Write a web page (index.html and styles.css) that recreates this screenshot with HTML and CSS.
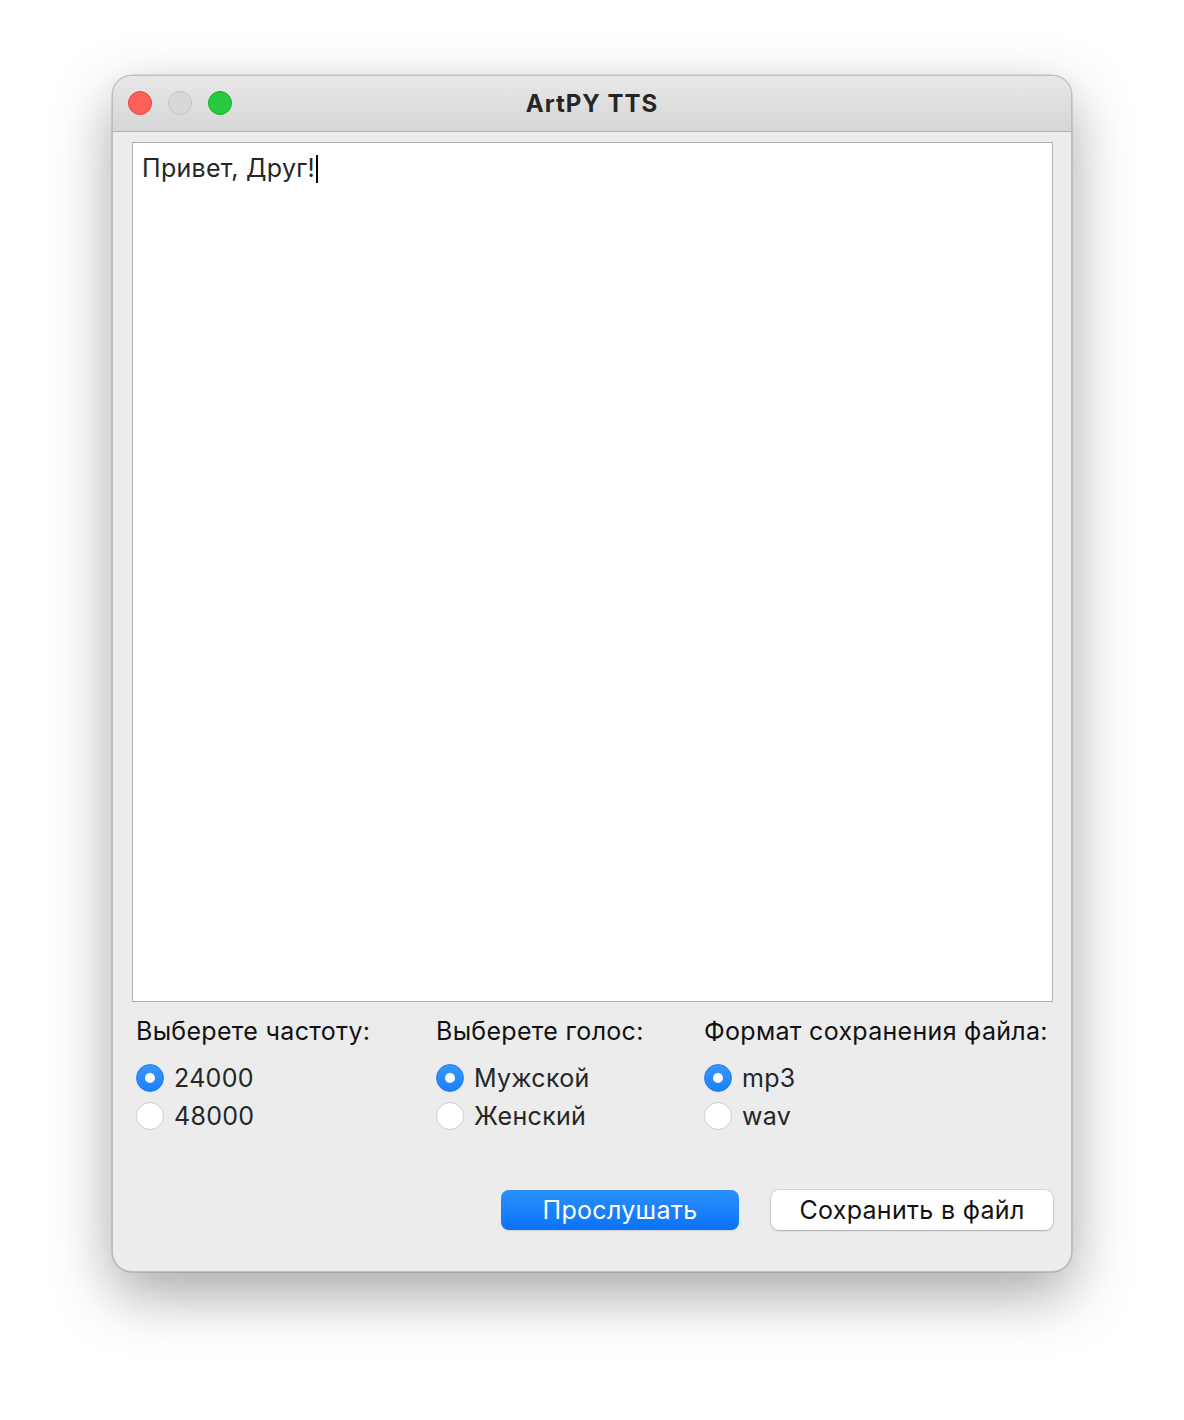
FILE: index.html
```html
<!DOCTYPE html>
<html lang="ru">
<head>
<meta charset="utf-8">
<title>ArtPY TTS</title>
<link rel="stylesheet" href="styles.css">
</head>
<body>
<div class="window">
  <div class="titlebar">
    <div class="lights">
      <span class="light red"></span>
      <span class="light grey"></span>
      <span class="light green"></span>
    </div>
    <div class="title">ArtPY TTS</div>
  </div>
  <div class="content">
    <div class="textarea"><span class="text">Привет, Друг!</span><span class="caret"></span></div>
    <div class="options">
      <div class="group g1">
        <div class="label">Выберете частоту:</div>
        <div class="radio"><span class="dot on"></span><span>24000</span></div>
        <div class="radio"><span class="dot"></span><span>48000</span></div>
      </div>
      <div class="group g2">
        <div class="label">Выберете голос:</div>
        <div class="radio"><span class="dot on"></span><span>Мужской</span></div>
        <div class="radio"><span class="dot"></span><span>Женский</span></div>
      </div>
      <div class="group g3">
        <div class="label">Формат сохранения файла:</div>
        <div class="radio"><span class="dot on"></span><span>mp3</span></div>
        <div class="radio"><span class="dot"></span><span>wav</span></div>
      </div>
    </div>
    <div class="buttons">
      <div class="btn primary">Прослушать</div>
      <div class="btn secondary">Сохранить в файл</div>
    </div>
  </div>
</div>
</body>
</html>
```
FILE: styles.css
```css
html, body {
  margin: 0;
  padding: 0;
  background: #ffffff;
}
body {
  width: 1184px;
  height: 1420px;
  overflow: hidden;
  font-family: "Inter", "Liberation Sans", sans-serif;
  letter-spacing: 0.3px;
}
.window {
  margin-left: 112px;
  margin-top: 75px;
  width: 960px;
  height: 1197px;
  box-sizing: border-box;
  background: #ececec;
  border-radius: 20px;
  border: 1px solid #bdbdbd;
  box-shadow: 0 22px 60px rgba(0, 0, 0, 0.35), 0 0 0 0.5px rgba(0,0,0,0.2);
  overflow: hidden;
  display: flex;
  flex-direction: column;
}
.titlebar {
  height: 55px;
  flex: none;
  background: linear-gradient(#e8e8e8, #d6d6d6);
  border-bottom: 1px solid #b3b3b3;
  position: relative;
  display: flex;
  align-items: center;
  justify-content: center;
}
.lights {
  position: absolute;
  left: 15px;
  top: 15px;
  display: flex;
  gap: 16px;
}
.light {
  width: 24px;
  height: 24px;
  border-radius: 50%;
  box-sizing: border-box;
}
.red { background: #fe5f57; border: 1px solid #e2463f; }
.grey { background: #d8d8d8; border: 1px solid #c2c2c2; }
.green { background: #28c840; border: 1px solid #1aab29; }
.title {
  font-size: 24px;
  font-weight: 700;
  letter-spacing: 1px;
  color: #262626;
  margin-top: 0;
}
.content {
  padding: 10px 18px 0 19px;
  display: flex;
  flex-direction: column;
}
.textarea {
  height: 860px;
  box-sizing: border-box;
  background: #ffffff;
  border: 1px solid #b0b0b0;
  padding: 10px 9px;
  font-size: 25px;
  color: #262626;
  line-height: 30px;
  display: flex;
  align-items: flex-start;
}
.caret {
  width: 2px;
  height: 28px;
  background: #000;
  margin-left: 1px;
  margin-top: 2px;
}
.options {
  display: flex;
  padding-top: 14px;
  padding-left: 4px;
}
.g1 { width: 300px; }
.g2 { width: 268px; }
.label {
  font-size: 25px;
  color: #111;
  line-height: 30px;
  height: 30px;
  margin-bottom: 13px;
}
.radio {
  display: flex;
  align-items: center;
  height: 38px;
  font-size: 25px;
  color: #262626;
}
.dot {
  width: 28px;
  height: 28px;
  border-radius: 50%;
  box-sizing: border-box;
  background: #ffffff;
  border: 1px solid #cfcfcf;
  margin-right: 10px;
  position: relative;
  flex: none;
}
.dot.on {
  background: linear-gradient(#3a96fc, #1a7ff8);
  border: 1px solid #1f7ff0;
}
.dot.on::after {
  content: "";
  position: absolute;
  left: 8px;
  top: 8px;
  width: 10px;
  height: 10px;
  border-radius: 50%;
  background: #ffffff;
}
.buttons {
  display: flex;
  justify-content: flex-end;
  gap: 32px;
  padding-top: 55px;
}
.btn {
  height: 40px;
  box-sizing: border-box;
  border-radius: 8px;
  font-size: 25px;
  display: flex;
  align-items: center;
  justify-content: center;
}
.primary {
  width: 238px;
  background: linear-gradient(#2c90fc, #0a72f8);
  color: #ffffff;
  box-shadow: 0 1px 1px rgba(0,0,0,0.12);
}
.secondary {
  width: 282px;
  background: #ffffff;
  color: #111;
  box-shadow: 0 0 0 0.5px rgba(0,0,0,0.18), 0 1px 2px rgba(0,0,0,0.2);
}
```
